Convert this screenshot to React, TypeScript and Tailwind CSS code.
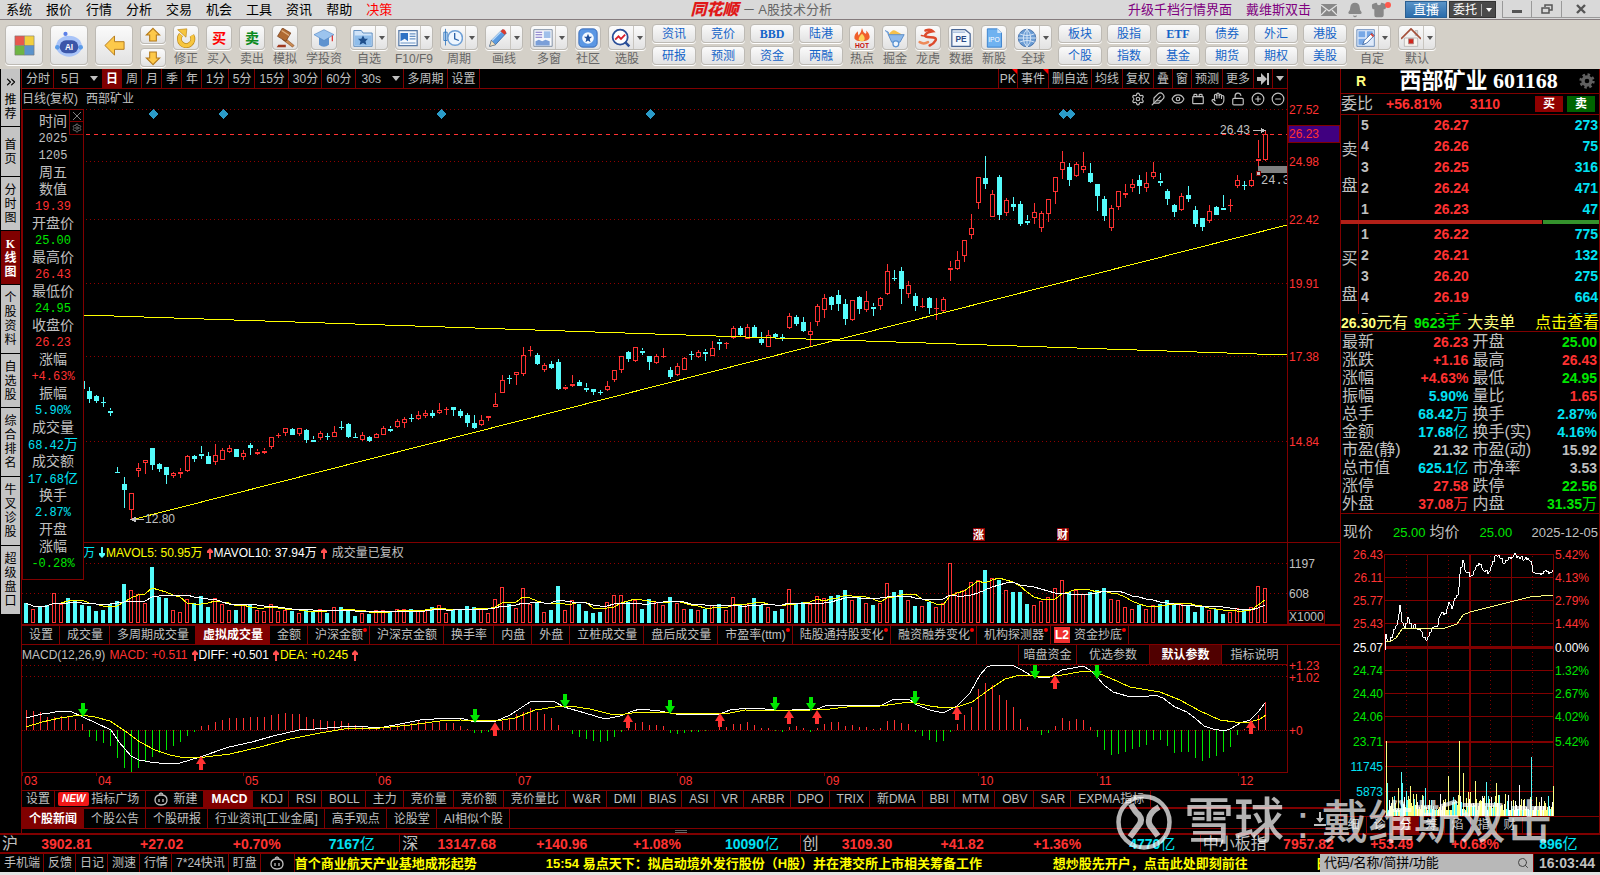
import { type ReactNode } from 'react';
import { Bell, ChevronsRight, CircleMinus, CirclePlus, Eye, Feather, Hand, LockOpen, Search, Settings, Shirt, ToyBrick } from 'lucide-react';

// k-line data: direction, high, body top, body bottom, low
const CANDLES = `c 381 381 389 389|c 387 391 399 403|c 395 396 401 403|c 397 402 402 407|c 408 410 412 416|c 467 472 472 472|c 477 484 490 508|r 493 493 510 519
r 463 468 471 477|r 460 460 463 474|c 448 448 465 470|c 463 464 469 472|c 467 467 475 484|r 472 473 476 478|r 468 471 473 478|r 455 456 471 472
c 455 456 459 462|c 446 453 455 459|c 452 456 464 464|r 444 455 462 465|r 448 450 460 460|r 445 448 452 453|c 449 449 457 457|r 450 453 457 460
c 443 445 448 455|r 449 451 453 455|r 448 450 452 454|r 437 437 447 449|r 433 435 435 438|r 428 428 433 436|c 428 429 435 435|r 428 428 434 436
c 429 430 440 443|c 436 439 441 441|r 431 433 438 440|c 433 436 436 440|r 426 432 437 437|c 421 427 427 430|c 423 424 437 438|c 433 437 437 438
r 432 435 440 441|c 436 437 441 442|r 433 434 438 438|r 426 428 435 435|c 426 428 430 432|r 419 421 427 428|r 417 419 423 428|c 414 418 418 422
r 411 415 419 420|r 410 413 416 418|c 410 413 416 418|r 403 410 413 414|r 407 409 409 415|c 407 407 410 416|c 409 411 416 418|c 413 415 423 427
c 415 423 428 429|r 415 420 425 426|r 415 415 417 421|r 393 404 407 407|r 375 380 393 393|c 375 378 378 384|r 372 372 375 385|r 347 355 374 376
r 346 350 350 356|c 353 355 364 365|r 363 365 370 372|c 361 364 368 369|c 359 362 389 390|r 385 386 388 390|r 375 383 385 387|c 380 382 386 386
c 383 387 389 392|c 389 389 392 395|c 390 392 392 395|r 381 386 390 391|r 370 370 380 382|r 356 356 370 373|c 351 352 359 362|r 347 347 361 362
c 348 350 352 355|c 356 356 362 370|r 354 356 363 364|r 348 356 356 358|c 367 370 377 379|r 363 366 375 376|r 357 358 370 370|c 351 354 354 360
r 350 352 357 358|c 349 351 353 361|r 341 348 356 356|c 339 341 343 350|r 342 343 343 349|r 326 328 338 339|c 326 328 335 337|r 324 327 339 339
c 325 327 337 338|c 332 339 343 345|r 330 335 347 347|c 333 334 337 339|c 334 337 337 341|r 313 316 328 329|c 315 317 324 326|c 317 322 331 332
r 322 331 335 347|r 304 306 322 326|r 294 298 310 318|c 296 297 305 310|c 290 295 304 311|c 299 304 319 325|r 300 300 320 321|c 296 297 309 314
r 291 301 310 312|c 303 306 308 316|r 297 298 306 310|r 264 271 294 295|c 270 278 278 281|c 267 271 289 304|r 281 285 294 298|c 293 296 306 311
r 298 306 306 308|c 297 298 308 314|r 298 308 308 320|r 297 299 311 313|r 261 267 269 281|r 251 260 269 270|r 240 240 256 262|r 214 228 235 239
r 177 177 203 209|c 156 178 184 189|r 190 194 217 217|c 175 177 215 220|r 198 200 213 216|c 197 204 207 211|c 201 204 224 226|c 215 220 222 225
r 203 212 218 224|r 211 213 228 232|r 199 199 214 222|r 177 177 192 204|r 151 162 170 179|c 163 167 180 186|r 162 164 176 177|r 152 166 170 173
c 163 173 182 183|c 184 184 196 211|c 196 199 216 221|r 205 208 228 231|r 191 191 207 210|r 184 192 194 198|r 179 184 188 192|c 175 180 186 194
r 172 183 188 192|r 162 172 177 179|c 173 180 182 186|c 189 191 199 205|c 204 205 212 217|r 193 196 210 211|c 186 195 199 202|c 206 210 224 227
c 218 218 227 231|r 205 211 221 223|c 206 207 215 215|c 195 207 209 210|r 199 205 205 212|r 175 180 186 188|c 181 185 185 190|r 173 180 186 187
r 140 158 160 171|r 131 134 160 161`
    .split(/[|\n]/)
    .map((row, i) => {
        const [dir, ...n] = row.split(' ');
        const [high, top, bottom, low] = n.map(Number);
        return { x: 82 + i * 7, up: dir === 'r', high, top, bottom, low };
    });

const VOLUMES = `c603 r609 c606 c605 r593 r604 c598 c600 c605 c606 c611 c610 c604 c601 c584 r590 r594 r603 c567 c597 c598 r610 r612 r599 c603 c596 c607 r598 r604 r610
c610 r605 c604 r610 r611 r604 r611 r610 c611 r613 c609 c612 r609 c613 r607 c607 c609 c616 r613 c614 r610 r610 c612 r609 r609 c609 r611 r610 c607 r605
r613 c610 c610 c606 c607 r609 r613 r599 r587 c604 r608 r588 r604 c602 r612 c610 c586 r610 r600 c604 c611 c613 c612 r602 r595 r595 c602 r600 c609 c599
r602 r605 c597 r603 r609 c609 r610 c609 r605 c604 r610 r597 c604 r604 c598 c605 r607 c611 c609 r589 c604 c602 r604 r596 r598 c596 c595 c590 r600 c597
r603 c605 r603 r583 c592 c590 r600 c606 r606 c602 r607 r603 r563 r592 r590 r582 r580 c570 r578 c580 r590 c592 c592 c604 r605 r601 r597 r588 r580 c592
r590 r594 c592 c590 c588 r599 r600 r607 r609 c605 r609 r605 c604 c600 c603 r604 c606 c612 c607 r610 c609 c614 r612 r608 c610 r607 r586 r588`
    .split(/\s+/)
    .map((v, i) => ({ x: 26 + i * 7, up: v[0] === 'r', top: Number(v.slice(1)) }));

// macd histogram end points, the zero axis is at 730
const MACD = `710 711 712 717 717 716 717 719 724 737 741 743 746 758 768 772 768 762 757 753 750 746 742 736 732 726 725 722 720 718 718 718 717 717 717 715 714 713 714 714
717 719 720 721 721 721 723 725 727 728 728 728 726 725 723 723 721 721 723 722 723 723 726 729 733 733 732 726 721 718 714 712 708 712 714 718 725 730 734 737
739 741 742 741 737 732 725 723 722 725 725 726 733 734 733 732 732 731 730 727 727 724 724 722 725 728 728 731 732 727 726 728 732 728 724 722 722 726 725 727
727 729 728 721 720 723 724 732 736 740 742 741 732 724 715 707 689 683 685 695 700 707 719 727 730 735 733 726 718 721 719 720 727 737 750 755 754 752 749 747
745 740 740 746 753 752 752 758 761 758 756 752 747 735 729 722 715 702`
    .split(/\s+/)
    .map(Number);

const DIFF =
    '26,718 42,714 50,713 60,711 70,711 83,717 96,723 111,730 119,742 131,756 139,760 150,762 168,764 180,763 200,757 229,747 252,742 273,736 299,730 315,729 340,727 357,726 378,728 395,725 420,720 448,718 464,719 475,722 496,721 510,715 530,702 540,701 555,702 564,707 585,713 605,719 620,716 633,711 640,709 660,711 676,714 720,714 730,710 748,708 765,709 785,711 800,709 817,709 825,706 838,705 860,705 880,706 894,699 910,700 917,705 930,710 943,713 957,706 970,693 980,675 987,667 993,665 1012,665 1022,670 1030,675 1042,678 1050,677 1062,670 1073,668 1083,666 1090,670 1097,677 1104,685 1113,692 1127,696 1144,697 1155,695 1163,698 1175,707 1187,712 1195,718 1204,726 1213,729 1225,731 1232,728 1240,723 1250,720 1258,712 1265,703';
const DEA =
    '26,727 42,722 60,718 80,715 95,717 110,721 125,731 140,742 155,750 170,755 185,758 205,757 230,754 260,747 290,739 320,733 350,728 380,728 410,725 440,721 460,720 495,721 515,718 535,710 555,707 570,706 590,709 610,714 625,714 640,712 670,713 730,713 745,710 790,711 830,709 855,706 880,706 910,702 930,706 945,708 957,707 972,702 990,689 1005,679 1020,675 1045,677 1062,675 1085,671 1093,671 1110,678 1130,687 1160,692 1180,700 1200,711 1220,720 1235,722 1250,722 1260,719 1266,715';

const SELL_SIGNALS = [[83, 703], [475, 709], [565, 694], [670, 700], [775, 697], [811, 697], [915, 691], [1035, 665], [1097, 665]];
const BUY_SIGNALS = [[201, 756], [495, 722], [628, 714], [720, 713], [789, 710], [817, 710], [957, 706], [1055, 675], [1251, 720]];

const average = (n: number) =>
    VOLUMES.map((v, i) => {
        const part = VOLUMES.slice(Math.max(0, i - n + 1), i + 1);
        return `${v.x},${Math.round(part.reduce((sum, p) => sum + p.top, 0) / part.length)}`;
    }).join(' ');

function PriceChart() {
    return (
        <svg className="block h-[434px] w-full overflow-visible" viewBox="22 109 1318 434" preserveAspectRatio="none" shapeRendering="crispEdges">
            {[109.5, 161.5, 219.5, 283.5, 356.5, 441.5].map((y) => (
                <line key={y} x1="22" x2="1287" y1={y} y2={y} stroke="#900000" strokeDasharray="1 3" />
            ))}
            <path d="M22 134.5H1287" stroke="#ff3232" strokeDasharray="4 4" />
            <path d="M1287.5 109V543M22 542.5H1340" stroke="#800000" />
            <rect x="1288" y="125.5" width="51" height="17" fill="#400080" stroke="#800000" />
            {CANDLES.map((c) => (
                <g key={c.x} stroke={c.up ? '#ff3232' : '#54fcfc'} fill={c.up ? 'none' : '#54fcfc'}>
                    <path d={`M${c.x + 0.5} ${c.high}V${c.top}M${c.x + 0.5} ${c.bottom}V${c.low}`} />
                    {c.bottom - c.top < 3 ? (
                        <path d={`M${c.x - 2} ${(c.top + c.bottom) / 2 + 0.5}h5`} strokeWidth={c.bottom - c.top || 1} />
                    ) : (
                        <rect x={c.x - 1.5} y={c.top + 0.5} width="4" height={c.bottom - c.top - 1} />
                    )}
                </g>
            ))}
            <path d="M84 315L1287 355M131 520L1287 225" stroke="#ffff00" />
            {[153, 223, 441, 650, 1063, 1070].map((x) => (
                <path key={x} d={`M${x} 109l5 5-5 5-5-5z`} fill="#2a9bc8" />
            ))}
            <rect x="1258" y="166" width="29" height="7" fill="#808080" />
            <rect x="1256" y="171" width="4" height="4" fill="#c0c0c0" stroke="#800000" />
            <path d="M131 519.5h13M131 519.5l4-2v4zM1253 130.5h12M1265 130.5l-4-2v4z" stroke="#c0c0c0" fill="#c0c0c0" />
            <g fontSize="12" fill="#ff3232">
                <text x="1289" y="114">27.52</text>
                <text x="1289" y="138">26.23</text>
                <text x="1289" y="166">24.98</text>
                <text x="1289" y="224">22.42</text>
                <text x="1289" y="288">19.91</text>
                <text x="1289" y="361">17.38</text>
                <text x="1289" y="446">14.84</text>
                <text x="145" y="523" fill="#c0c0c0">12.80</text>
                <text x="1220" y="134" fill="#c0c0c0">26.43</text>
            </g>
            <svg x="1260" y="174" width="27" height="14">
                <text x="1" y="10" fontSize="12" fill="#c0c0c0" fontFamily="Liberation Mono">24.39</text>
            </svg>
            <g fontSize="11" fontWeight="bold" fill="#fff">
                <rect x="973" y="528" width="12" height="13" fill="#900000" />
                <rect x="1057" y="528" width="12" height="13" fill="#900000" />
                <text x="973" y="539">涨</text>
                <text x="1057" y="539">财</text>
            </g>
        </svg>
    );
}

function VolumeChart() {
    return (
        <svg className="block h-[61px] w-full overflow-visible" viewBox="22 563 1318 61" preserveAspectRatio="none" shapeRendering="crispEdges">
            <path d="M22 563.5H1287M22 593.5H1287" stroke="#900000" strokeDasharray="1 3" />
            <path d="M1287.5 563V624" stroke="#800000" />
            {VOLUMES.map((v) =>
                v.up ? (
                    <rect key={v.x} x={v.x - 1.5} y={v.top + 0.5} width="3" height={622 - v.top} fill="#000" stroke="#ff3232" />
                ) : (
                    <rect key={v.x} x={v.x - 2} y={v.top} width="4" height={623 - v.top} fill="#54fcfc" />
                ),
            )}
            <polyline points={average(5)} fill="none" stroke="#ffff00" />
            <polyline points={average(10)} fill="none" stroke="#fff" />
            <rect x="1288.5" y="610.5" width="36" height="13" fill="none" stroke="#800000" />
            <g fontSize="12" fill="#c0c0c0">
                <text x="1289" y="568">1197</text>
                <text x="1289" y="598">608</text>
                <text x="1289" y="621">X1000</text>
            </g>
        </svg>
    );
}

function MacdChart() {
    const months: [string, number][] = [['03', 22], ['04', 96], ['05', 243], ['06', 376], ['07', 516], ['08', 677], ['09', 824], ['10', 978], ['11', 1097], ['12', 1238]];
    return (
        <svg className="block h-[125px] w-full overflow-visible" viewBox="22 665 1318 125" preserveAspectRatio="none" shapeRendering="crispEdges">
            <path d="M22 665.5H1287M22 676.5H1287" stroke="#900000" strokeDasharray="1 3" />
            <path d="M22 730.5H1287" stroke="#900000" strokeDasharray="1 1" />
            <path d="M1287.5 665V773M22 772.5H1287" stroke="#800000" />
            {MACD.map((y, i) => (
                <path key={i} d={`M${26.5 + i * 7} 730V${y}`} stroke={y < 730 ? '#ff3232' : '#00e600'} />
            ))}
            <polyline points={DIFF} fill="none" stroke="#fff" />
            <polyline points={DEA} fill="none" stroke="#ffff00" />
            {SELL_SIGNALS.map(([x, y]) => (
                <path key={x} d={`M${x - 2} ${y}h4v6h3l-5 8-5-8h3z`} fill="#00e600" shapeRendering="auto" />
            ))}
            {BUY_SIGNALS.map(([x, y]) => (
                <path key={x} d={`M${x - 2} ${y + 14}h4v-6h3l-5-8-5 8h3z`} fill="#ff3232" shapeRendering="auto" />
            ))}
            <g fontSize="12" fill="#ff3232">
                <text x="1289" y="670">+1.23</text>
                <text x="1289" y="682">+1.02</text>
                <text x="1289" y="735">+0</text>
                {months.map(([label, x]) => (
                    <g key={label}>
                        <path d={`M${x + 0.5} 773v3`} stroke="#800000" />
                        <text x={x + 2} y="785">{label}</text>
                    </g>
                ))}
            </g>
        </svg>
    );
}

const MINI_PRICE: number[][] = [
    [1385, 650], [1386, 634], [1388, 641], [1392, 638], [1394, 629], [1396, 626], [1398, 620], [1400, 605], [1402, 622], [1405, 628], [1408, 617], [1410, 624],
    [1413, 628], [1415, 624], [1418, 629], [1421, 631], [1424, 638], [1427, 640], [1430, 632], [1434, 627], [1437, 627], [1440, 616], [1443, 612], [1446, 614],
    [1449, 602], [1452, 609], [1455, 598], [1458, 595], [1460, 574], [1463, 560], [1465, 570], [1468, 573], [1471, 576], [1475, 570], [1478, 566], [1481, 564],
    [1485, 572], [1489, 572], [1492, 565], [1496, 555], [1500, 558], [1505, 563], [1510, 557], [1516, 555], [1520, 559], [1526, 557], [1531, 561], [1533, 572],
    [1538, 574], [1545, 571], [1550, 572], [1553, 570],
];
const MINI_SPIKES: Record<number, [number, string]> = {
    1386: [741, '#ffff80'], 1401: [772, '#54fcfc'], 1425: [788, '#54fcfc'], 1440: [794, '#fff'], 1448: [776, '#ffff80'], 1459: [741, '#ffff80'],
    1463: [773, '#ffff80'], 1475: [781, '#ffff80'], 1486: [782, '#54fcfc'], 1496: [783, '#ffff80'], 1519: [785, '#fff'], 1531: [757, '#54fcfc'], 1553: [786, '#ffff80'],
};
const MINI_LABELS: [number, string, string, string][] = [
    [554, '26.43', '5.42%', '#ff3232'], [577, '26.11', '4.13%', '#ff3232'], [600, '25.77', '2.79%', '#ff3232'], [623, '25.43', '1.44%', '#ff3232'],
    [647, '25.07', '0.00%', '#fff'], [670, '24.74', '1.32%', '#00e600'], [693, '24.40', '2.67%', '#00e600'], [716, '24.06', '4.02%', '#00e600'],
    [741, '23.71', '5.42%', '#00e600'], [766, '11745', '', '#02e2f4'], [791, '5873', '', '#02e2f4'],
];

const noise = (i: number) => Math.abs(Math.sin(i * 12.9898) * 43758.5453) % 1;

function IntradayChart() {
    const bars = Array.from({ length: 168 }, (_, i) => {
        const x = 1386 + i;
        const n = noise(i);
        const height = 6 + n * n * (i < 25 ? 32 : i > 65 && i < 85 ? 22 : 16);
        const [top, color] = MINI_SPIKES[x] ?? [816 - Math.round(height), ['#ffff80', '#54fcfc', '#fff', '#ffff80'][Math.floor(n * 97) % 4]];
        return <path key={x} d={`M${x}.5 816V${top}`} stroke={color} />;
    });
    const line = MINI_PRICE.flatMap(([x, y], i) => {
        const [nx, ny] = MINI_PRICE[i + 1] ?? [x + 1, y];
        return Array.from({ length: nx - x }, (_, s) => {
            const jitter = s ? Math.round(noise(x + s) * 5 - 2.5) : 0;
            return `${x + s},${Math.round(y + ((ny - y) * s) / (nx - x)) + jitter}`;
        });
    });
    return (
        <svg className="block h-[265px] w-full overflow-visible" viewBox="1341 551 258 265" preserveAspectRatio="none" shapeRendering="crispEdges">
            <g stroke="#800000">
                {MINI_LABELS.map(([y]) => (
                    <path key={y} d={`M1384 ${y}.5H1553`} strokeWidth={y === 647 ? 3 : y === 741 ? 2 : 1} />
                ))}
                <path d="M1384.5 554V816M1427.5 554V816M1511.5 554V816M1553.5 554V816" />
                <path d="M1470 554V816" strokeWidth="2" />
                <path d="M1406.5 556V816M1448.5 556V816M1490.5 556V816M1532.5 556V816" strokeDasharray="1 3" />
            </g>
            {bars}
            <polyline points={line.join(' ')} fill="none" stroke="#fff" />
            <polyline
                points="1386,642 1391,641 1396,638 1402,629 1410,628 1430,629 1445,628 1457,624 1463,615 1470,612 1490,607 1510,602 1530,597 1553,595"
                fill="none"
                stroke="#ffff80"
            />
            <g fontSize="12">
                {MINI_LABELS.map(([y, price, percent, color]) => (
                    <g key={y} fill={color}>
                        <text x="1383" y={y + 5} textAnchor="end">{price}</text>
                        <text x="1555" y={y + 5}>{percent}</text>
                    </g>
                ))}
            </g>
        </svg>
    );
}

// toolbar drawings, all on a 24 x 24 grid
const ICONS: Record<string, ReactNode> = {
    windows: (
        <>
            <path d="M2 2h10v10H2z" fill="#e8584e" />
            <path d="M12 2h10v10H12z" fill="#f2cf3e" />
            <path d="M2 12h10v10H2z" fill="#6fb544" />
            <path d="M12 12h10v10H12z" fill="#5b93cc" />
            <path d="M2 2h20v20H2zM12 2v20M2 12h20" fill="none" stroke="#777" strokeWidth=".6" />
        </>
    ),
    robot: (
        <>
            <circle cx="9" cy="2.5" r="1.8" fill="#5b7fe8" />
            <ellipse cx="12" cy="13" rx="11" ry="9" fill="#a9c4f8" />
            <circle cx="2" cy="14" r="2" fill="#5b9be8" />
            <circle cx="22" cy="14" r="2" fill="#5b9be8" />
            <rect x="4" y="8" width="16" height="11" rx="5.5" fill="#3b55a8" />
            <text x="12" y="16" fontSize="7" fontWeight="bold" fill="#fff" textAnchor="middle">AI</text>
        </>
    ),
    left: <path d="M2 12L12 2v6h10v8H12v6z" fill="#fdc94a" stroke="#b47a1c" strokeWidth="1" />,
    up: <path d="M12 2l10 10h-5v9H7v-9H2z" fill="#fdc94a" stroke="#b47a1c" strokeWidth="1.6" />,
    down: <path d="M12 22L2 12h5V3h10v9h5z" fill="#fdc94a" stroke="#b47a1c" strokeWidth="1.6" />,
    fix: (
        <>
            <path d="M6 8a8 8 0 1 0 13 1" fill="none" stroke="#b9861c" strokeWidth="6" />
            <path d="M6 8a8 8 0 1 0 13 1" fill="none" stroke="#f7c63f" strokeWidth="4.6" />
            <path d="M2 2l11-1-1 10z" fill="#f7c63f" stroke="#b9861c" strokeWidth=".8" />
        </>
    ),
    buy: <text x="12" y="18" fontSize="17" fontWeight="bold" fill="#f00" textAnchor="middle">买</text>,
    sell: <text x="12" y="18" fontSize="17" fontWeight="bold" fill="#0a8a1e" textAnchor="middle">卖</text>,
    hammer: (
        <>
            <path d="M11 11l12 10-2 2-12-9z" fill="#c98a52" stroke="#7a3f1a" strokeWidth=".6" />
            <path d="M9 0l10 6-6 10-10-6z" fill="#b06a32" stroke="#6b3410" strokeWidth=".8" />
            <path d="M8 3l9 6" stroke="#e0b080" strokeWidth="1.5" />
            <path d="M4 20h9v3H2z" fill="#a03a20" />
        </>
    ),
    cap: (
        <>
            <path d="M6 11v9q6 5 12 0v-9" fill="#5f93cf" />
            <path d="M0 8l12-6 12 6-12 7z" fill="#9cc4ee" stroke="#4a7fc0" strokeWidth=".7" />
            <path d="M22 9v7" stroke="#d33" strokeWidth="1.5" />
        </>
    ),
    folder: (
        <>
            <path d="M1 3h9l2 3h11v16H1z" fill="#cfe3f8" stroke="#4a7fb8" />
            <path d="M2 9h20v12H2z" fill="#8fbdea" />
            <path d="M12 9l2 4h4l-3 3 1 4-4-2-4 2 1-4-3-3h4z" fill="#1f4f8c" />
        </>
    ),
    report: (
        <>
            <path d="M1 3h22v18H1z" fill="#f5f9fe" stroke="#5a7ca8" strokeWidth="1.5" />
            <path d="M3 6h9v10l-4-3-5 3z" fill="#2f72c4" />
            <path d="M14 7h7M14 10h7M14 13h7M3 18h18" stroke="#6a93c4" strokeWidth="1.4" />
        </>
    ),
    clock: (
        <>
            <path d="M3 1v20M1 5h4v10H1z" stroke="#2e74bd" fill="#cfe3f8" />
            <circle cx="14.5" cy="12" r="8.8" fill="#eef6ff" stroke="#6fa0d6" strokeWidth="1.8" />
            <path d="M14 6v7l5 2" fill="none" stroke="#2b62a8" strokeWidth="1.6" />
        </>
    ),
    pencil: (
        <>
            <path d="M2 22l2-7L17 2l5 4L9 20z" fill="#5b9be0" stroke="#23548f" strokeWidth=".8" />
            <path d="M5 15L17 3" stroke="#b8dafa" strokeWidth="1.6" />
            <path d="M17 2q3-2 5 4l-2 2-5-4z" fill="#d93a2e" />
            <path d="M2 22l2-7 5 5z" fill="#f3e2c0" stroke="#555" strokeWidth=".5" />
        </>
    ),
    panes: (
        <>
            <path d="M1 2h22v20H1z" fill="#f6f8fc" stroke="#6f7f96" />
            <path d="M3 5h8M3 8h8M3 11h8" stroke="#7b6fc4" strokeWidth="1.3" />
            <path d="M13 4h8v8h-8z" fill="#9fc0ea" />
            <path d="M3 21v-5l4-2 4 2 4-2 5 2v5z" fill="#7b9fd8" />
        </>
    ),
    community: (
        <>
            <rect x="1" y="1" width="22" height="22" rx="5" fill="#5b97e4" stroke="#2e62b0" />
            <circle cx="12" cy="12" r="7" fill="#f4f9ff" />
            <path d="M12 7l1.5 3.500H17l-3 2.500 1 4-3-2-3 2 1-4-3-2.500h3.500z" fill="#1f4f9c" />
        </>
    ),
    stockpick: (
        <>
            <circle cx="11" cy="11" r="9" fill="#fff" stroke="#2b4f98" strokeWidth="2.2" />
            <path d="M5 14l4-4 3 3 5-5" fill="none" stroke="#d8202c" strokeWidth="2.2" />
            <path d="M17 17l5 5" stroke="#2b4f98" strokeWidth="3" />
        </>
    ),
    fire: (
        <>
            <path d="M12 0q1 5 4 7 2-1 1-4 5 5 4 9-2 4-9 4t-9-3Q2 8 7 4q0 4 1 5 3-3 4-9z" fill="#f0602c" />
            <path d="M12 7q4 4 3 7-1 2-3 2t-4-2q0-3 4-7z" fill="#fdd45a" />
            <text x="12" y="24" fontSize="8" fontWeight="bold" fill="#c8100c" textAnchor="middle">HOT</text>
        </>
    ),
    cart: (
        <>
            <path d="M4 8q5-7 8-5t9 5z" fill="#f5c04a" />
            <path d="M0 3l4 2v3h19l-5 9H8L4 8" fill="#8cb8ea" stroke="#4f86c6" />
            <circle cx="13" cy="19" r="3.5" fill="#eef5fd" stroke="#5b93d2" strokeWidth="1.5" />
        </>
    ),
    dragon: (
        <g fill="none" strokeLinecap="round">
            <path d="M9 3q6-2 9 1-7 1-9 4t6 3 6 4-7 6" stroke="#dd4a2c" strokeWidth="3" />
            <path d="M2 17q5 3 10 0" stroke="#ee8a5a" strokeWidth="3" />
            <path d="M4 9l6 1" stroke="#dd4a2c" strokeWidth="1.6" />
        </g>
    ),
    pe: (
        <>
            <path d="M1 2h16l6 5v15H1z" fill="#f4f8fd" stroke="#4a6796" strokeWidth="1.5" />
            <path d="M2 5h15" stroke="#9fb6d8" strokeWidth="1.5" />
            <text x="12" y="17" fontSize="10" fontWeight="bold" fill="#2b4a86" textAnchor="middle">PE</text>
        </>
    ),
    ipo: (
        <>
            <path d="M4 1h12l5 5v17H4z" fill="#6fb2f0" stroke="#2f78c8" />
            <path d="M16 1v5h5z" fill="#d6eafc" />
            <text x="12" y="17" fontSize="8" fill="#fff" textAnchor="middle">IPO</text>
        </>
    ),
    globe: (
        <>
            <circle cx="12" cy="12" r="10.5" fill="#6a9cd4" stroke="#3c69a4" />
            <path d="M3 7q9 4 18 0M3 17q9-4 18 0M1 12h22M12 1v22M12 1q-9 11 0 22M12 1q9 11 0 22" fill="none" stroke="#dbe9f8" strokeWidth="1.1" />
        </>
    ),
    custom: (
        <>
            <path d="M1 2h21v20H1z" fill="#dfeafa" stroke="#5a7fb5" />
            <path d="M3 4h8v7H3zM13 4h7v7h-7zM3 13h8v7H3z" fill="#78a8e6" />
            <path d="M8 20l2-5 9-9 3 3-9 9z" fill="#fff" stroke="#345e9c" />
            <path d="M18 7l3 3" stroke="#d93a2e" strokeWidth="2" />
        </>
    ),
    home: (
        <>
            <path d="M17 3h3v6h-3z" fill="#ddd" stroke="#999" strokeWidth=".6" />
            <path d="M4 12h16v10H4z" fill="#f8f4ee" stroke="#999" strokeWidth=".7" />
            <path d="M0 13L12 1l12 12" fill="none" stroke="#a4503a" strokeWidth="2" />
            <path d="M9 13h6v6H9z" fill="#d0261c" stroke="#a88" />
        </>
    ),
};

const BUTTON = 'flex items-center justify-center rounded-sm border border-[#bdbab4] bg-gradient-to-b from-[#fbfbfb] to-[#e2e2e2] shadow-[0_1px_0_#fff]';

function Icon({ name, className = 'size-[22px]' }: { name: string; className?: string }) {
    return (
        <svg viewBox="0 0 24 24" className={className}>
            {ICONS[name]}
        </svg>
    );
}

function Tool({ icon, label, drop, className }: { icon: string; label: string; drop?: boolean; className?: string }) {
    return (
        <div className={`flex shrink-0 flex-col items-center pt-[5px] ${drop ? 'w-[38px]' : 'w-[26px]'} ${className ?? ''}`}>
            <button aria-label={label} className={`${BUTTON} h-[25px] w-full`}>
                <span className="flex flex-1 justify-center">
                    <Icon name={icon} className="size-5" />
                </span>
                {drop && (
                    <span className="flex h-full w-3 items-center justify-center border-l border-[#c8c5bf]">
                        <span className="border-x-[3px] border-t-4 border-x-transparent border-t-[#555]" />
                    </span>
                )}
            </button>
            <span className="mt-[3px] text-xs leading-3 whitespace-nowrap text-[#666]">{label}</span>
        </div>
    );
}

function Pairs({ items }: { items: [string, string][] }) {
    return (
        <div className="flex shrink-0 gap-[5px] pt-1">
            {items.map(([top, bottom]) => (
                <div key={top} className="flex flex-col gap-[3px]">
                    {[top, bottom].map((t) => (
                        <button
                            key={t}
                            className={`${BUTTON} h-[19px] w-11 text-xs text-[#1464c8] ${/[A-Z]/.test(t) ? "font-['Liberation_Serif',serif] font-bold" : ''}`}
                        >
                            {t}
                        </button>
                    ))}
                </div>
            ))}
        </div>
    );
}

function MenuBar() {
    return (
        <header className="flex h-5 items-center border-b border-[#857c7e] bg-[#d9d9d9] text-[13px] leading-none whitespace-nowrap">
            <nav className="flex flex-1 gap-3.5 pl-1.5">
                {['系统', '报价', '行情', '分析', '交易', '机会', '工具', '资讯', '帮助', '决策'].map((m) => (
                    <button key={m} className={m === '决策' ? 'text-[#f00]' : 'text-black'}>
                        {m}
                    </button>
                ))}
            </nav>
            <div className="flex items-center gap-1">
                <span className="text-[16px] leading-none font-black text-[#e01818] italic">同花顺</span>
                <span className="text-[13px] text-[#666]">－ A股技术分析</span>
            </div>
            <div className="flex w-[48%] shrink-0 items-center justify-end text-[#800080]">
                <a href="#">升级千档行情界面</a>
                <a href="#" className="ml-3.5">
                    戴维斯双击
                </a>
                <svg viewBox="0 0 16 12" className="ml-2.5 h-3 w-4">
                    <path d="M0 0h16v12H0z" fill="#888" />
                    <path d="M0 1l8 6 8-6M0 11l5-5M16 11l-5-5" fill="none" stroke="#e4e4e4" strokeWidth="1.2" />
                </svg>
                <Bell className="ml-2.5 size-4 fill-[#888] text-[#888]" />
                <span className="relative mr-[18px] ml-2">
                    <Shirt className="size-4 fill-[#888] text-[#888]" />
                    <span className="absolute top-0 -right-1 size-1.5 rounded-full bg-[#ff5a4e]" />
                </span>
                <button className="h-[17px] w-[42px] border border-[#2a5f92] bg-gradient-to-b from-[#5a94c8] to-[#2a6cab] text-[13px] leading-none text-white">直播</button>
                <button className="ml-0.5 flex h-[17px] w-[47px] items-center justify-center gap-1 border border-[#333] bg-[#4a4a4a] text-xs text-white">
                    委托
                    <span className="h-3 border-l border-[#aaa]" />
                    <span className="border-x-[3px] border-t-4 border-x-transparent border-t-white" />
                </button>
                <div className="ml-1.5 flex h-[17px] text-[#555]">
                    <button aria-label="最小化" className="flex w-[30px] items-end justify-center border border-t-0 border-[#999] pb-1">
                        <span className="h-[3px] w-2.5 bg-[#555]" />
                    </button>
                    <button aria-label="还原" className="flex w-[30px] items-center justify-center border-r border-b border-[#999]">
                        <svg viewBox="0 0 12 10" className="h-2.5 w-3" fill="none" stroke="#555" strokeWidth="1.5">
                            <path d="M4 3V1h7v5H8M1 4h7v5H1z" />
                        </svg>
                    </button>
                    <button aria-label="关闭" className="flex w-[38px] items-center justify-center border-b border-[#999]">
                        <svg viewBox="0 0 10 10" className="size-2.5" stroke="#555" strokeWidth="2.4">
                            <path d="M1 1l8 8M9 1L1 9" />
                        </svg>
                    </button>
                </div>
            </div>
        </header>
    );
}

function Toolbar() {
    return (
        <div className="flex h-[49px] items-start overflow-hidden bg-[#d4d0c8] pl-[5px]">
            <div className="flex shrink-0 gap-[7px] pt-[5px]">
                {['windows', 'robot', 'left'].map((name) => (
                    <button key={name} aria-label={name} className={`${BUTTON} h-[40px] w-[38px]`}>
                        <Icon name={name} className={name === 'robot' ? 'size-7' : 'size-[23px]'} />
                    </button>
                ))}
                <div className="flex flex-col gap-1">
                    {['up', 'down'].map((name) => (
                        <button key={name} aria-label={name} className={`${BUTTON} h-[19px] w-[26px]`}>
                            <Icon name={name} className="size-4" />
                        </button>
                    ))}
                </div>
            </div>
            <div className="ml-[7px] flex shrink-0 gap-[7px]">
                <Tool icon="fix" label="修正" />
                <Tool icon="buy" label="买入" />
                <Tool icon="sell" label="卖出" />
                <Tool icon="hammer" label="模拟" />
                <Tool icon="cap" label="学投资" className="ml-1.5" />
                <Tool icon="folder" label="自选" drop className="ml-1.5" />
                <Tool icon="report" label="F10/F9" drop />
                <Tool icon="clock" label="周期" drop />
                <Tool icon="pencil" label="画线" drop />
                <Tool icon="panes" label="多窗" drop />
                <Tool icon="community" label="社区" />
                <Tool icon="stockpick" label="选股" drop />
            </div>
            <div className="ml-1.5 flex shrink-0 gap-1.5">
                <Pairs items={[['资讯', '研报'], ['竞价', '预测'], ['BBD', '资金'], ['陆港', '两融']]} />
                <div className="flex gap-[7px]">
                    <Tool icon="fire" label="热点" />
                    <Tool icon="cart" label="掘金" />
                    <Tool icon="dragon" label="龙虎" />
                    <Tool icon="pe" label="数据" />
                    <Tool icon="ipo" label="新股" />
                    <Tool icon="globe" label="全球" drop />
                </div>
                <Pairs items={[['板块', '个股'], ['股指', '指数'], ['ETF', '基金'], ['债券', '期货'], ['外汇', '期权'], ['港股', '美股']]} />
                <div className="flex gap-[7px]">
                    <Tool icon="custom" label="自定" drop />
                    <Tool icon="home" label="默认" drop />
                </div>
            </div>
        </div>
    );
}

function SideTabs() {
    const tabs: [string, string][] = [
        ['推荐', 'h-[57px]'], ['首页', 'h-[49px]'], ['分时图', 'h-[53px]'], ['K线图', 'h-[53px]'], ['个股资料', 'h-[68px]'],
        ['自选股', 'h-[53px]'], ['综合排名', 'h-[68px]'], ['牛叉诊股', 'h-[68px]'], ['超级盘口', 'h-[68px]'],
    ];
    return (
        <aside className="flex w-[21px] shrink-0 flex-col gap-px pr-px pl-px">
            {tabs.map(([label, height]) => (
                <button
                    key={label}
                    className={`flex flex-col items-center justify-center text-xs leading-3.5 ${height} ${label === 'K线图' ? 'bg-[#800000] font-bold text-white' : 'bg-[#c4c4c4] text-black'}`}
                >
                    {label === '推荐' && <ChevronsRight className="mb-1 size-3.5 shrink-0" />}
                    {label.split('').map((ch) => (
                        <span key={ch} className={ch === 'K' ? "font-['Liberation_Serif',serif]" : ''}>
                            {ch}
                        </span>
                    ))}
                </button>
            ))}
        </aside>
    );
}

const CELL = 'h-full shrink-0 border-r border-[#800000] whitespace-nowrap';
const Caret = () => <span className="border-x-4 border-t-[5px] border-x-transparent border-t-[#c0c0c0]" />;

function PeriodBar() {
    return (
        <div className="mr-[52px] flex h-5 items-stretch border-x border-b border-[#800000] text-xs leading-[18px]">
            <button className={`${CELL} pr-[3px] pl-1`}>分时</button>
            <button className="flex w-12 shrink-0 items-center justify-between pr-1 pl-[7px]">
                5日 <Caret />
            </button>
            {['日', '周', '月', '季', '年', '1分', '5分', '15分', '30分', '60分'].map((p) => (
                <button key={p} className={`${CELL} pr-[3px] pl-1 ${p === '日' ? 'bg-[#800000] font-bold text-white' : ''}`}>
                    {p}
                </button>
            ))}
            <button className={`${CELL} flex w-12 items-center justify-between pr-[3px] pl-1.5`}>
                30s <Caret />
            </button>
            <button className={`${CELL} pr-[3px] pl-1`}>多周期</button>
            <button className={`${CELL} pr-[3px] pl-1`}>设置</button>
            <div className="ml-auto flex border-l border-[#800000]">
                {['PK', '事件', '删自选', '均线', '复权', '叠', '窗', '预测', '更多'].map((p) => (
                    <button key={p} className={`${CELL} relative ${p === 'PK' ? 'px-px' : 'px-[3px]'}`}>
                        {p}
                        {(p === 'PK' || p === '事件') && <span className="absolute top-0 right-0 border-t-[5px] border-l-[5px] border-t-[#f00] border-l-transparent" />}
                    </button>
                ))}
                <button aria-label="最新" className={`${CELL} flex w-[19px] items-center justify-center`}>
                    <svg viewBox="0 0 12 12" className="size-3" fill="#c0c0c0">
                        <path d="M0 4h4V0l6 6-6 6V8H0zM10 0h2v12h-2z" />
                    </svg>
                </button>
                <button aria-label="展开" className="flex w-3.5 items-center justify-center">
                    <Caret />
                </button>
            </div>
        </div>
    );
}

function InfoPanel() {
    const rows: [string, string][] = [
        ['时间', ''], ['2025', ''], ['1205', ''], ['周五', ''], ['数值', ''], ['19.39', 'r'], ['开盘价', ''], ['25.00', 'g'], ['最高价', ''], ['26.43', 'r'],
        ['最低价', ''], ['24.95', 'g'], ['收盘价', ''], ['26.23', 'r'], ['涨幅', ''], ['+4.63%', 'r'], ['振幅', ''], ['5.90%', 'c'], ['成交量', ''], ['68.42万', 'c'],
        ['成交额', ''], ['17.68亿', 'c'], ['换手', ''], ['2.87%', 'c'], ['开盘', ''], ['涨幅', ''], ['-0.28%', 'g'],
    ];
    const colors: Record<string, string> = { r: 'text-[#ff3232]', g: 'text-[#00e600]', c: 'text-[#02e2f4]', '': '' };
    return (
        <div className="absolute top-0 left-0 h-[471px] w-[62px] border border-[#800000] bg-black pt-1 text-center">
            {rows.map(([text, tone], i) => (
                <div key={i} className={`h-[17px] font-['Liberation_Mono','Noto_Sans_CJK_SC',monospace] text-xs leading-[17px] whitespace-nowrap ${colors[tone]}`}>
                    {text.split(/([一-龥]+)/).map((part, j) => (
                        <span key={j} className={j % 2 ? 'text-sm leading-[17px]' : ''}>
                            {part}
                        </span>
                    ))}
                </div>
            ))}
            <div className="absolute top-0 right-0 flex w-3.5 flex-col border-b border-l border-[#800000] bg-black text-[#808080]">
                <button aria-label="关闭面板" className="flex h-3 items-center justify-center border-b border-[#800000]">
                    <svg viewBox="0 0 10 10" className="size-2.5" stroke="currentColor">
                        <path d="M1 1l8 8M9 1L1 9" />
                    </svg>
                </button>
                <button aria-label="面板设置" className="flex h-3 items-center justify-center">
                    <Settings className="size-2.5" />
                </button>
            </div>
        </div>
    );
}

const UpArrow = ({ down }: { down?: boolean }) => (
    <svg viewBox="0 0 6 12" className="mr-px ml-1 h-3 w-1.5" fill={down ? '#54fcfc' : '#ff5050'}>
        <path d={down ? 'M2 0h2v6h2v2L3 11 0 8V6h2z' : 'M2 12h2V6h2V4L3 1 0 4v2h2z'} />
    </svg>
);

function TabRow({ items, active, className }: { items: string[]; active: string; className: string }) {
    return (
        <div className={`flex items-stretch overflow-hidden text-xs ${className}`}>
            {items.map((item) => (
                <button
                    key={item}
                    className={`${CELL} flex items-center pl-[7px] ${/^[A-Z&]{2,4}$/.test(item) ? 'pr-[5px]' : 'pr-1.5'} ${item === active ? 'bg-[#800000] font-bold text-white' : ''}`}
                >
                    {item.startsWith('NEW') && <span className="-ml-1 mr-0.5 rounded-xs bg-[#f01818] px-1 text-[10px] leading-3.5 font-bold text-white italic">NEW</span>}
                    {item.startsWith('L2') && <span className="-ml-1 mr-1 bg-[#f03030] px-px font-bold text-white">L2</span>}
                    {item === '新建' && <Robot className="mr-1 size-4" />}
                    {item.replace(/^NEW|^L2|\*$/g, '')}
                    {item.endsWith('*') && <span className="-mr-1 mb-2.5 size-1 rounded-full bg-[#f00]" />}
                </button>
            ))}
        </div>
    );
}

function Robot({ className }: { className: string }) {
    return (
        <svg viewBox="0 0 16 16" className={className} fill="none" stroke="currentColor" strokeWidth="1.3">
            <path d="M8 4c4 0 6 2 6 5s-2 5-6 5-6-2-6-5 2-5 6-5zM6 3l2-1 2 1M6 8v3M10 8v3" />
        </svg>
    );
}

function ChartColumn() {
    return (
        <main className="flex min-w-0 flex-1 flex-col">
            <PeriodBar />
            <div className="flex flex-1 flex-col border-l border-[#800000]">
                <div className="mr-[52px] flex h-5 items-center border-r border-[#800000] text-xs">
                    日线(复权) <span className="ml-2">西部矿业</span>
                    <div className="ml-auto flex gap-1.5 pr-0.5">
                        {[Settings, Feather, Eye, ToyBrick, Hand, LockOpen, CirclePlus, CircleMinus].map((Glyph, i) => (
                            <Glyph key={i} className="size-3.5" strokeWidth={2} />
                        ))}
                    </div>
                </div>
                <div className="relative">
                    <PriceChart />
                    <div className="mr-[52px] flex h-5 items-center border-r border-[#800000] pl-[61px] text-xs">
                        <span className="text-[#02e2f4]">万</span>
                        <UpArrow down />
                        <span className="text-[#ffff00]">MAVOL5: 50.95万</span>
                        <UpArrow />
                        <span className="text-white">MAVOL10: 37.94万</span>
                        <UpArrow />
                        <span className="ml-1">成交量已复权</span>
                    </div>
                    <VolumeChart />
                    <InfoPanel />
                </div>
                <TabRow
                    className="h-[21px] border-t-2 border-b border-[#800000]"
                    active="虚拟成交量"
                    items={['设置', '成交量', '多周期成交量', '虚拟成交量', '金额', '沪深金额*', '沪深京金额', '换手率', '内盘', '外盘', '立桩成交量', '盘后成交量', '市盈率(ttm)*', '陆股通持股变化*', '融资融券变化*', '机构探测器*', 'L2资金抄底*']}
                />
                <div className="mr-[52px] flex h-5 items-center border-r border-[#800000] text-xs">
                    <span>MACD(12,26,9)</span>
                    <span className="ml-1 text-[#ff3232]">MACD: +0.511</span>
                    <UpArrow />
                    <span className="text-white">DIFF: +0.501</span>
                    <UpArrow />
                    <span className="text-[#ffff00]">DEA: +0.245</span>
                    <UpArrow />
                    <div className="ml-auto flex h-full border-b border-l border-[#800000]">
                        <button className="w-[58px] border-r border-[#800000]">暗盘资金</button>
                        <button className="w-[73px] border-r border-[#800000]">优选参数</button>
                        <button className="w-[72px] border-r border-[#800000] bg-[#500000] font-bold text-white">默认参数</button>
                        <button className="w-[65px]">指标说明</button>
                    </div>
                </div>
                <MacdChart />
                <TabRow
                    className="h-[19px] border-t border-b-2 border-[#800000] [&>button:first-child]:px-1"
                    active="MACD"
                    items={['设置', 'NEW指标广场', '新建', 'MACD', 'KDJ', 'RSI', 'BOLL', '主力', '竞价量', '竞价额', '竞价量比', 'W&R', 'DMI', 'BIAS', 'ASI', 'VR', 'ARBR', 'DPO', 'TRIX', '新DMA', 'BBI', 'MTM', 'OBV', 'SAR', 'EXPMA指标']}
                />
                <div className="flex h-5 items-stretch border-b border-[#800000]">
                    <TabRow className="flex-1" active="个股新闻" items={['个股新闻', '个股公告', '个股研报', '行业资讯[工业金属]', '高手观点', '论股堂', 'AI相似个股']} />
                    <button aria-label="收起" className="mr-3.5">
                        <svg viewBox="0 0 12 14" className="h-3.5 w-3" fill="#c0c0c0">
                            <path d="M5 0h2v6h3l-4 5-4-5h3zM0 12h12v2H0z" />
                        </svg>
                    </button>
                </div>
                <div className="flex flex-1 items-center justify-center">
                    <span className="h-[3px] w-3 border-y border-[#666]" />
                </div>
            </div>
        </main>
    );
}

const RED = 'text-[#ff3232]';
const GREEN = 'text-[#00e600]';
const CYAN = 'text-[#02e2f4]';

// digits are bold, the unit after them is not
function Amount({ value }: { value: string }) {
    const unit = value.match(/[万亿手]$/)?.[0];
    return (
        <>
            {unit ? value.slice(0, -1) : value}
            {unit && <span className="text-[15px] leading-none font-normal">{unit}</span>}
        </>
    );
}

function Book({ side, rows }: { side: string; rows: [string, string, string][] }) {
    return (
        <div className="flex overflow-hidden">
            <div className="flex w-[18px] shrink-0 flex-col items-center justify-center gap-5 border-r border-[#800000] text-base leading-4">
                <span>{side}</span>
                <span>盘</span>
            </div>
            <table className="w-full self-start text-sm font-bold">
                <tbody>
                    {rows.map(([level, price, amount]) => (
                        <tr key={level} className="h-[21px] leading-[21px]">
                            <td className="pl-0.5">{level}</td>
                            <td className={`w-[110px] pr-1.5 text-right ${RED}`}>{price}</td>
                            <td className={`w-[130px] pr-px text-right ${CYAN}`}>{amount}</td>
                        </tr>
                    ))}
                </tbody>
            </table>
        </div>
    );
}

function QuotePanel() {
    const stats: string[][] = [
        ['最新', '26.23', RED, '开盘', '25.00', GREEN],
        ['涨跌', '+1.16', RED, '最高', '26.43', RED],
        ['涨幅', '+4.63%', RED, '最低', '24.95', GREEN],
        ['振幅', '5.90%', CYAN, '量比', '1.65', RED],
        ['总手', '68.42万', CYAN, '换手', '2.87%', CYAN],
        ['金额', '17.68亿', CYAN, '换手(实)', '4.16%', CYAN],
        ['市盈(静)', '21.32', '', '市盈(动)', '15.92', ''],
        ['总市值', '625.1亿', CYAN, '市净率', '3.53', ''],
        ['涨停', '27.58', RED, '跌停', '22.56', GREEN],
        ['外盘', '37.08万', RED, '内盘', '31.35万', GREEN],
    ];
    return (
        <aside className="flex w-[260px] shrink-0 flex-col border-x border-[#800000]">
            <div className="flex h-[25px] items-center border-b border-[#800000]">
                <span className="ml-[15px] text-sm font-bold text-[#ffff80]">R</span>
                <h1 className="flex-1 pl-3 text-center font-['Liberation_Serif','Noto_Sans_CJK_SC',serif] text-[22px] leading-none font-bold whitespace-nowrap text-white">西部矿业 601168</h1>
                <svg viewBox="0 0 24 24" className="mr-1 size-4" fill="none" stroke="#606060">
                    <circle cx="12" cy="12" r="6" strokeWidth="5" />
                    <circle cx="12" cy="12" r="9.5" strokeWidth="4" strokeDasharray="3.7 3.7" />
                </svg>
            </div>
            <div className="flex h-[21px] items-center border-b border-[#800000] text-sm font-bold">
                <span className="text-base leading-none font-normal">委比</span>
                <span className={`ml-[13px] ${RED}`}>+56.81%</span>
                <span className={`ml-7 ${RED}`}>3110</span>
                <button className="ml-auto h-4 w-7 bg-[#900000] text-xs leading-4 text-white">买</button>
                <button className="mr-1 ml-1 h-4 w-7 bg-[#006400] text-xs leading-4 text-white">卖</button>
            </div>
            <Book side="卖" rows={[['5', '26.27', '273'], ['4', '26.26', '75'], ['3', '26.25', '316'], ['2', '26.24', '471'], ['1', '26.23', '47']]} />
            <div className="flex h-1 gap-px">
                <div className="w-[78%] bg-[#b22018]" />
                <div className="flex-1 bg-[#34912c]" />
            </div>
            <div className="flex h-[90px] overflow-hidden">
                <div className="h-[105px] w-full">
                    <Book side="买" rows={[['1', '26.22', '775'], ['2', '26.21', '132'], ['3', '26.20', '275'], ['4', '26.19', '664'], ['5', '26.18', '1085']]} />
                </div>
            </div>
            <div className="flex h-[18px] items-center overflow-hidden border-b border-[#800000] text-base leading-none whitespace-nowrap text-[#ffff80]">
                <b className="text-sm">26.30</b>元有
                <span className={`ml-1.5 ${GREEN}`}>
                    <b className="text-sm">9623</b>手
                </span>
                <span className="ml-1.5">大卖单</span>
                <a href="#" className="ml-auto text-[#ffff00]">
                    点击查看
                </a>
            </div>
            <div className="border-b border-[#800000] pt-px">
                <table className="w-full text-sm font-bold">
                    <tbody>
                        {stats.map(([a, av, ac, b, bv, bc]) => (
                            <tr key={a} className="h-[18px] leading-[18px] whitespace-nowrap">
                                <th className="pl-px text-left text-base leading-[18px] font-normal">{a}</th>
                                <td className={`w-[70px] text-right ${ac}`}>
                                    <Amount value={av} />
                                </td>
                                <th className="w-[58px] pl-1 text-left text-base leading-[18px] font-normal">{b}</th>
                                <td className={`w-[70px] pr-0.5 text-right ${bc}`}>
                                    <Amount value={bv} />
                                </td>
                            </tr>
                        ))}
                    </tbody>
                </table>
            </div>
            <div className="flex flex-1 items-center pr-px pl-0.5 text-[13px]">
                <span className="text-[15px]">现价</span>
                <span className={`ml-5 ${GREEN}`}>25.00</span>
                <span className="ml-1 text-[15px]">均价</span>
                <span className={`ml-5 ${GREEN}`}>25.00</span>
                <span className="ml-auto">2025-12-05</span>
            </div>
            <IntradayChart />
            <div className="flex h-[17px] border-t border-[#800000] text-xs leading-4">
                {['细', '诊', '分', '筹', '焰', '指', '财'].map((t) => (
                    <button key={t} className={`${CELL} w-[26px] ${t === '分' ? 'bg-[#800000] text-white' : ''}`}>
                        {t}
                    </button>
                ))}
            </div>
        </aside>
    );
}

function IndexBar() {
    const groups = [
        ['沪', '3902.81', '+27.02', '+0.70%', '7167亿'],
        ['深', '13147.68', '+140.96', '+1.08%', '10090亿'],
        ['创', '3109.30', '+41.82', '+1.36%', '4770亿'],
        ['中小板指', '7957.82', '+53.49', '+0.68%', '896亿'],
    ];
    return (
        <div className="flex h-[21px] border-y-2 border-[#800000] text-sm leading-4 font-bold">
            {groups.map(([name, ...values]) => (
                <div key={name} className="flex flex-1 items-center border-r border-[#800000] last:border-r-0">
                    <span className="min-w-[19px] pl-0.5 text-base leading-none font-normal">{name}</span>
                    {values.map((v, i) => (
                        <span key={v} className={`flex-1 text-center ${i === 3 ? CYAN : RED}`}>
                            <Amount value={v} />
                        </span>
                    ))}
                </div>
            ))}
        </div>
    );
}

function StatusBar() {
    return (
        <footer className="flex h-[18px] items-stretch overflow-hidden text-xs">
            {['手机端', '反馈', '日记', '测速', '行情', '7*24快讯', '盯盘'].map((t) => (
                <button key={t} className={`${CELL} pr-[3px] pl-1`}>
                    {t}
                </button>
            ))}
            <button aria-label="助手" className={`${CELL} flex w-[34px] items-center justify-center`}>
                <Robot className="size-4" />
            </button>
            <div className="flex min-w-0 flex-1 items-center overflow-hidden text-[13px] leading-none font-bold whitespace-nowrap text-[#ffff00]">
                <a href="#" className="w-[251px] shrink-0">首个商业航天产业基地成形起势</a>
                <a href="#" className="w-[507px] shrink-0">15:54 易点天下：拟启动境外发行股份（H股）并在港交所上市相关筹备工作</a>
                <a href="#" className="w-[263px] shrink-0">想炒股先开户，点击此处即刻前往</a>
                <a href="#">日</a>
            </div>
            <label className="flex w-[213px] items-center bg-[#b8b8b8] px-1">
                <input className="min-w-0 flex-1 text-[13px] text-black placeholder-black outline-none" placeholder="代码/名称/简拼/功能" aria-label="代码/名称/简拼/功能" />
                <Search className="size-3 text-[#444]" />
            </label>
            <time className="flex w-[67px] items-center justify-center border-l border-[#800000] text-sm font-bold">16:03:44</time>
        </footer>
    );
}

function Watermark() {
    return (
        <div className="pointer-events-none absolute right-12 bottom-[22px] flex h-[62px] items-center text-white/70">
            <svg viewBox="0 0 56 56" className="size-14" fill="none" stroke="currentColor" strokeWidth="4.5">
                <circle cx="28" cy="28" r="25.5" />
                <path d="M15 10q4 8 8 11 4 5 0 10l-9 12M43 13q-9 5-10 12-1 5 3 9l6 8" strokeWidth="6" />
            </svg>
            <span className="ml-3 text-[50px] leading-none font-medium">雪球</span>
            <span className="w-[38px] text-center text-[46px] leading-none font-medium">:</span>
            <span className="text-[46px] leading-none font-medium">戴维斯双击</span>
        </div>
    );
}

export default function App() {
    return (
        <div className="relative flex min-h-screen w-full flex-col bg-black font-['Liberation_Sans','Noto_Sans_CJK_SC',sans-serif] text-[#c0c0c0]">
            <MenuBar />
            <Toolbar />
            <div className="flex flex-1">
                <SideTabs />
                <ChartColumn />
                <QuotePanel />
            </div>
            <IndexBar />
            <StatusBar />
            <div className="h-[3px] bg-[#e4e4e4]" />
            <Watermark />
        </div>
    );
}
